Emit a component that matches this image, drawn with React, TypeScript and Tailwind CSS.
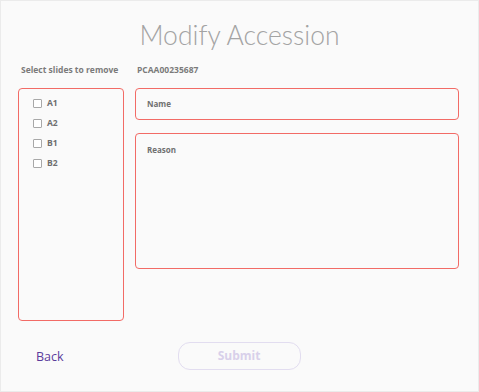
import { useState } from 'react'

const slides = ['A1', 'A2', 'B1', 'B2']

export default function App() {
  const [checked, setChecked] = useState<Set<string>>(new Set())

  const toggle = (id: string) => {
    setChecked(prev => {
      const next = new Set(prev)
      if (next.has(id)) next.delete(id)
      else next.add(id)
      return next
    })
  }

  return (
    <div
      className="w-[479px] h-[392px] bg-[#fafafa] border border-[#ebebeb] text-[#6f6f6f] overflow-hidden"
      style={{ fontFamily: '"Open Sans", "Noto Sans", sans-serif' }}
    >
      {/* Title */}
      <h1
        className="text-center text-[26.5px] font-light text-[#a3a3a3] leading-none pt-[21px] h-[52px]"
        style={{ fontFamily: 'Lato, "Open Sans", sans-serif' }}
      >
        Modify Accession
      </h1>

      {/* Header labels */}
      <div className="flex items-center h-[35px] text-[8.5px] font-bold text-[#7a7a7a]">
        <span className="pl-[20px] w-[136px]">Select slides to remove</span>
        <span>PCAA00235687</span>
      </div>

      <div className="flex pl-[17px] gap-[11px]">
        {/* Slides list */}
        <div className="w-[106px] h-[233px] border-[1.5px] border-[#f26b66] rounded-[4px] pt-[4px] pl-[14px] flex flex-col">
          {slides.map(id => (
            <label key={id} className="flex items-center h-[20px] gap-[5px] cursor-pointer">
              <input
                type="checkbox"
                checked={checked.has(id)}
                onChange={() => toggle(id)}
                className="appearance-none w-[9px] h-[9px] border border-[#a8a8a8] rounded-[1px] bg-white"
              />
              <span className="text-[8.5px] font-bold text-[#6e6e6e]">{id}</span>
            </label>
          ))}
        </div>

        {/* Fields */}
        <div className="flex flex-col gap-[13px]">
          <div className="w-[324px] h-[32px] border-[1.5px] border-[#f26b66] rounded-[4px] flex items-center pl-[11px] text-[8px] font-bold text-[#707070]">
            Name
          </div>
          <div className="w-[324px] h-[136px] border-[1.5px] border-[#f26b66] rounded-[4px] pl-[11px] pt-[10px] text-[8px] font-bold text-[#707070]">
            Reason
          </div>
        </div>
      </div>

      {/* Footer */}
      <div className="flex items-center mt-[21px]">
        <button className="ml-[35px] mt-[2px] text-[12.5px] text-[#5a3c9c] font-medium">Back</button>
        <button
          disabled
          className="ml-[114px] w-[123px] h-[28px] rounded-[12px] border border-[#e2ddf0] text-[12px] font-bold text-[#d8d0ea]"
        >
          Submit
        </button>
      </div>
    </div>
  )
}
